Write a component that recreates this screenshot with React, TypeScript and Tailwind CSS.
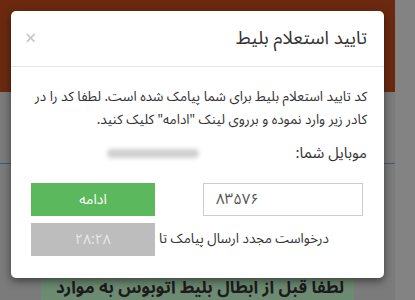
import React from "react";

const fa = { fontFamily: '"Noto Sans Arabic", "DejaVu Sans", sans-serif' };

export default function App() {
  return (
    <div className="relative h-[300px] w-[415px] overflow-hidden bg-[#7b7b7b]" style={fa}>
      {/* page behind the overlay */}
      <div className="flex h-full">
        <div className="flex w-[395px] flex-col">
          <div className="h-[97px] bg-[#6b2a10]" />
          <div className="h-[74px]" />
          <div className="h-px bg-[#3d5a73]" />
          <div className="flex flex-1 justify-center pt-[108px]">
            <div
              dir="rtl"
              className="w-[313px] bg-[#6d8a72] px-[10px] pt-[4px] text-[17px] font-bold leading-[24px] text-[#1c1c1c]"
            >
              لطفا قبل از ابطال بلیط اتوبوس به موارد
            </div>
          </div>
        </div>
        <div className="w-[20px] bg-[#838383]" />
      </div>

      {/* modal */}
      <div
        dir="rtl"
        className="absolute left-[11px] top-[11px] flex h-[267px] w-[373px] flex-col rounded-[5px] bg-white shadow-[0_3px_9px_rgba(0,0,0,0.5)]"
      >
        <div className="flex h-[56px] items-center justify-between border-b border-[#e5e5e5] pl-[14px] pr-[17px]">
          <h4 className="text-[18.5px] text-[#333]">تایید استعلام بلیط</h4>
          <span className="text-[20px] leading-none text-[#c4c4c4]">×</span>
        </div>
        <div className="flex flex-col px-[17px] pt-[18px] text-[#333]">
          <p className="text-[13.5px] leading-[23px]">
            کد تایید استعلام بلیط برای شما پیامک شده است. لطفا کد را در کادر زیر وارد نموده و برروی لینک "ادامه" کلیک کنید.
          </p>
          <div className="mt-[11px] flex items-center gap-[96px]">
            <span className="text-[15px]">موبایل شما:</span>
            <span className="h-[9px] w-[92px] rounded-full bg-[#cfcfcf] blur-[2px]" />
          </div>
          <div className="mt-[18px] flex items-center justify-between pl-[3px] pr-[4px]">
            <div className="flex h-[33px] w-[160px] items-center justify-end border border-[#ccc] px-[12px] text-[15px] tracking-[1px] text-[#555]">
              ۸۳۵۷۶
            </div>
            <button className="h-[33px] w-[124px] bg-[#5cb85c] text-[14px] text-white">ادامه</button>
          </div>
          <div className="mt-[7px] flex items-center justify-between pl-[3px] pr-[38px]">
            <span className="text-[13.5px]">درخواست مجدد ارسال پیامک تا</span>
            <button className="h-[33px] w-[124px] bg-[#bdbdbd] text-[14px] text-[#e8e8e8]">۲۸:۲۸</button>
          </div>
        </div>
      </div>
    </div>
  );
}
